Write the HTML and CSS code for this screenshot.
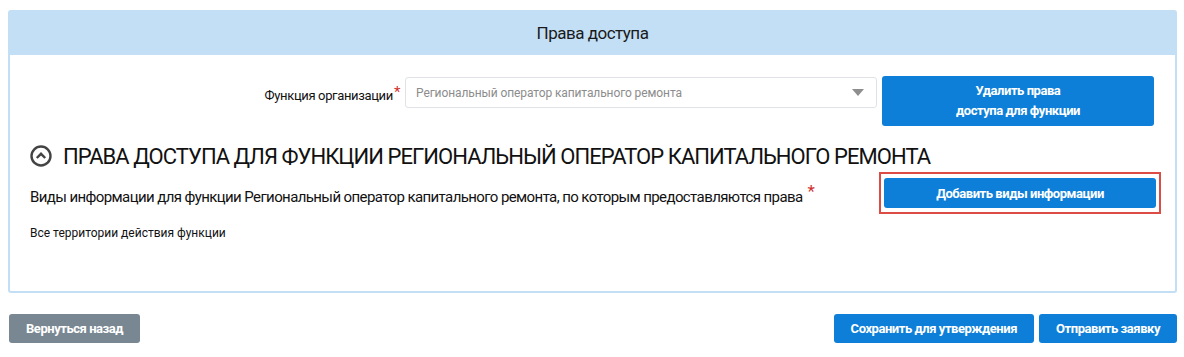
FILE: index.html
```html
<!DOCTYPE html>
<html lang="ru">
<head>
    <meta charset="UTF-8">
    <title>Права доступа</title>
    <link rel="stylesheet" href="styles.css">
</head>
<body>
    <div class="panel">
        <div class="panel-header">Права доступа</div>
        <div class="panel-body">
            <div class="function-row">
                <label class="field-label">Функция организации<span class="req">*</span></label>
                <div class="select">
                    <span>Региональный оператор капитального ремонта</span>
                    <span class="select-arrow"></span>
                </div>
                <button class="btn btn-blue btn-remove">Удалить права<br>доступа для функции</button>
            </div>

            <h2 class="section-title">
                <svg class="toggle-icon" width="22" height="22" viewBox="0 0 22 22">
                    <circle cx="11" cy="11" r="9.5" fill="none" stroke="#444" stroke-width="2.4"/>
                    <path d="M6.8 13 L11 8.8 L15.2 13" fill="none" stroke="#444" stroke-width="2.4"/>
                </svg>
                ПРАВА ДОСТУПА ДЛЯ ФУНКЦИИ РЕГИОНАЛЬНЫЙ ОПЕРАТОР КАПИТАЛЬНОГО РЕМОНТА
            </h2>

            <div class="info-row">
                <div class="info-text">Виды информации для функции Региональный оператор капитального ремонта, по которым предоставляются права<span class="req">*</span></div>
                <div class="highlight">
                    <button class="btn btn-blue btn-add">Добавить виды информации</button>
                </div>
            </div>

            <div class="territory">Все территории действия функции</div>
        </div>
    </div>

    <div class="footer">
        <button class="btn btn-gray">Вернуться назад</button>
        <div class="footer-right">
            <button class="btn btn-blue">Сохранить для утверждения</button>
            <button class="btn btn-blue">Отправить заявку</button>
        </div>
    </div>
</body>
</html>
```

FILE: styles.css
```css
body {
    margin: 0;
    padding: 10px 7px 0 8px;
    font-family: "Roboto", "Liberation Sans", sans-serif;
    color: #111;
    background: #fff;
}

.panel {
    border: 2px solid #c2dff5;
    border-top: none;
    border-radius: 3px;
    height: 283px;
    box-sizing: border-box;
}

.panel-header {
    background-color: #c2dff5;
    height: 45px;
    line-height: 46px;
    text-align: center;
    font-size: 17px;
    letter-spacing: -0.5px;
    color: #1a1a1a;
}

.panel-body {
    padding: 21px 20px 0 20px;
}

.function-row {
    display: flex;
    align-items: flex-start;
    justify-content: flex-end;
}

.field-label {
    font-size: 13px;
    letter-spacing: -0.35px;
    margin-top: 7px;
    margin-right: 5px;
}

.req {
    color: #d0312d;
    font-size: 15px;
    vertical-align: 3px;
    margin-left: 1px;
}

.select {
    width: 472px;
    height: 31px;
    box-sizing: border-box;
    border: 1px solid #dfe3e8;
    border-radius: 3px;
    display: flex;
    align-items: center;
    justify-content: space-between;
    padding: 0 12px 0 10px;
    margin-top: 1px;
    font-size: 12px;
    letter-spacing: -0.1px;
    color: #8c8c8c;
}

.select-arrow {
    width: 0;
    height: 0;
    border-left: 6px solid transparent;
    border-right: 6px solid transparent;
    border-top: 7px solid #8e8e8e;
}

.btn {
    border: none;
    border-radius: 3px;
    color: #fff;
    font-family: inherit;
    font-size: 13px;
    letter-spacing: -0.45px;
    font-weight: bold;
    cursor: pointer;
    padding: 0 17px;
    height: 29px;
}

.btn-blue {
    background-color: #0e7fd9;
}

.btn-gray {
    background-color: #798793;
}

.btn-remove {
    width: 272px;
    height: 50px;
    line-height: 20px;
    margin-left: 5px;
    margin-right: 1px;
}

.section-title {
    display: flex;
    align-items: center;
    gap: 11px;
    margin: 16px 0 0 0;
    font-size: 22px;
    letter-spacing: -0.95px;
    font-weight: normal;
    color: #111;
    height: 28px;
}

.toggle-icon {
    flex: none;
}

.info-row {
    display: flex;
    align-items: center;
    justify-content: space-between;
    margin-top: 2px;
}

.info-text {
    font-size: 15px;
    letter-spacing: -0.6px;
    color: #111;
}

.info-text .req {
    font-size: 17px;
    vertical-align: 5px;
    margin-left: 5px;
}

.highlight {
    border: 2px solid #dd4b45;
    padding: 4px 3px;
    margin-right: -6px;
}

.btn-add {
    width: 272px;
    height: 30px;
    display: block;
}

.territory {
    font-size: 12px;
    margin-top: 12px;
}

.footer {
    display: flex;
    justify-content: space-between;
    margin-top: 21px;
    padding-left: 1px;
}

.footer-right {
    display: flex;
    gap: 5px;
}
```
